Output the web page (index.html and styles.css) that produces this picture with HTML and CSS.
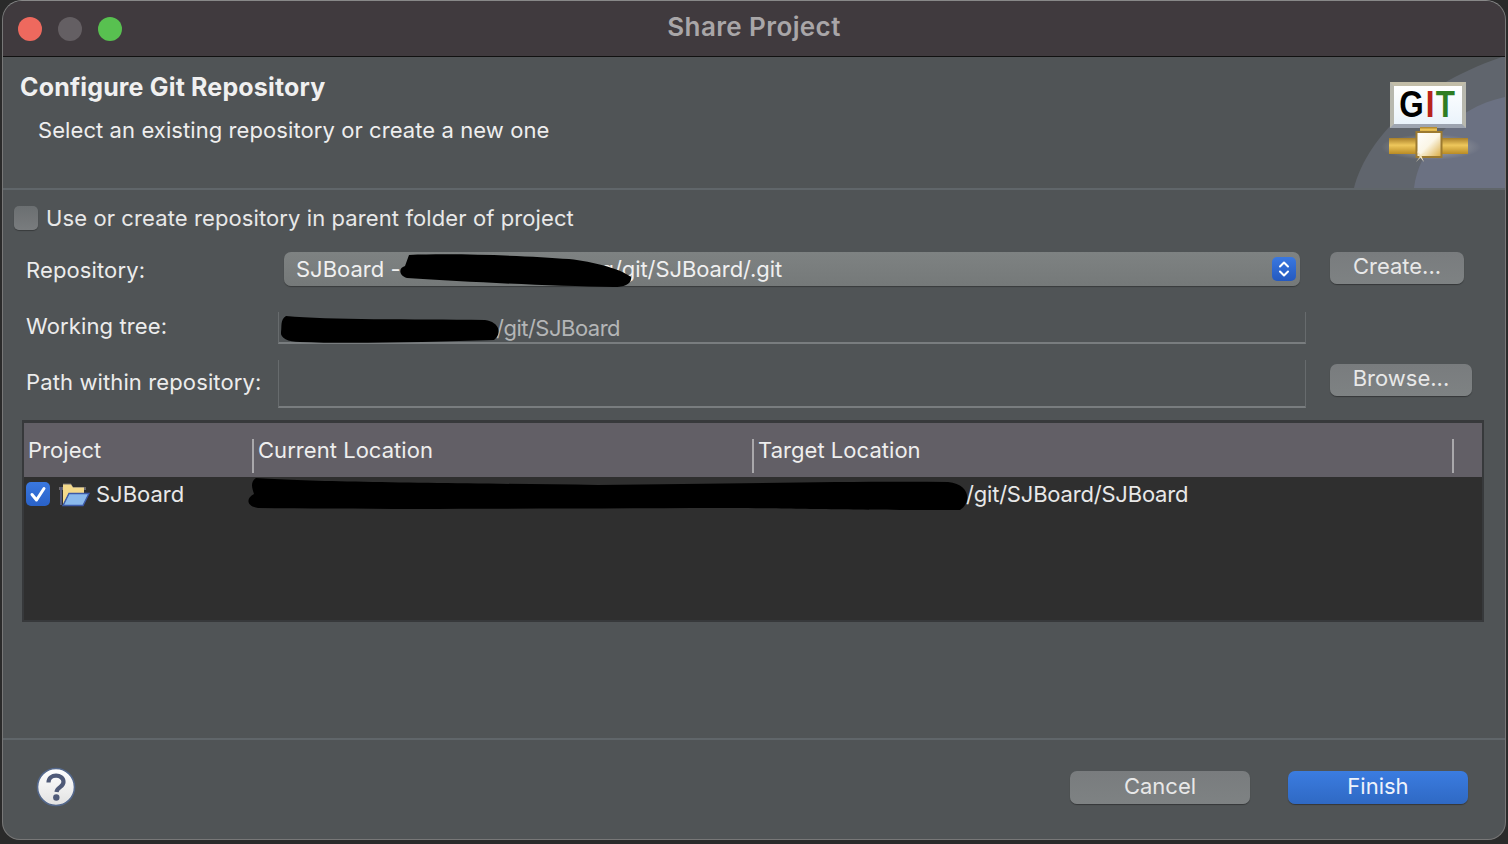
FILE: index.html
```html
<!DOCTYPE html>
<html lang="en">
<head>
  <meta charset="UTF-8">
  <title>Share Project</title>
  <link rel="stylesheet" href="styles.css">
</head>
<body>

  <div class="window">

    <!-- title bar -->
    <div class="titlebar">
      <span class="light light-red"></span>
      <span class="light light-grey"></span>
      <span class="light light-green"></span>
      <div class="title">Share Project</div>
    </div>

    <!-- wizard banner -->
    <div class="banner">
      <h1 class="banner-title">Configure Git Repository</h1>
      <p class="banner-text">Select an existing repository or create a new one</p>
      <svg class="banner-swoosh" width="152" height="132" viewBox="0 0 152 132">
        <defs>
          <radialGradient id="glow" cx="0.5" cy="0.5" r="0.5">
            <stop offset="0" stop-color="#c0c0bc" stop-opacity="0.95"/>
            <stop offset="1" stop-color="#b4b4b2" stop-opacity="0"/>
          </radialGradient>
        </defs>
        <path d="M1 132C11 90 59 30 152 0V132Z" fill="#60656d"/>
        <path d="M61 132C65 95 99 52 152 41V132Z" fill="#6b7182"/>
        <ellipse cx="78" cy="91" rx="50" ry="13" fill="url(#glow)"/>
      </svg>
      <div class="git-logo">
        <div class="git-sign"><span class="git-g">G</span><span class="git-i">I</span><span class="git-t">T</span></div>
        <svg class="git-pipe" width="80" height="32" viewBox="0 0 80 32">
          <defs>
            <linearGradient id="pipe" x1="0" y1="0" x2="0" y2="1">
              <stop offset="0" stop-color="#a87f2a"/>
              <stop offset="0.45" stop-color="#eec75c"/>
              <stop offset="1" stop-color="#b98b24"/>
            </linearGradient>
            <linearGradient id="valve" x1="0" y1="0" x2="1" y2="1">
              <stop offset="0" stop-color="#ffffff"/>
              <stop offset="0.5" stop-color="#fbf6e6"/>
              <stop offset="1" stop-color="#d9a93c"/>
            </linearGradient>
          </defs>
          <rect x="0" y="11" width="79" height="16" fill="url(#pipe)"/>
          <rect x="31" y="0" width="17" height="6" fill="url(#pipe)"/>
          <rect x="27.500" y="5" width="25" height="25" fill="url(#valve)" stroke="#9c7a30" stroke-width="2"/>
          <path d="M27 35L33 27L40 24L33 29ZM28 24L32 28L35 35L30 29Z" fill="#f4e6c0"/>
        </svg>
      </div>
    </div>

    <!-- form -->
    <div class="content">
      <label class="check-row">
        <span class="checkbox"></span>
        <span>Use or create repository in parent folder of project</span>
      </label>

      <div class="form-grid">
        <div class="form-label label-repo">Repository:</div>
        <div class="select">
          <span>SJBoard -</span>
          <span class="select-path">g/git/SJBoard/.git</span>
          <span class="select-arrows">
            <svg width="24" height="24" viewBox="0 0 24 24">
              <path d="M8 9.500L12 5.500L16 9.500M8 14.500L12 18.500L16 14.500" fill="none" stroke="#fff" stroke-width="2" stroke-linecap="round" stroke-linejoin="round"/>
            </svg>
          </span>
        </div>
        <button class="btn btn-create">Create...</button>

        <div class="form-label label-tree">Working tree:</div>
        <div class="field field-tree"><span class="tree-path">/git/SJBoard</span></div>
        <div></div>

        <div class="form-label label-path">Path within repository:</div>
        <div class="field field-path"></div>
        <button class="btn btn-browse">Browse...</button>
      </div>

      <div class="table">
        <div class="table-head">
          <div class="col-project">Project</div>
          <div class="col-current">Current Location</div>
          <div class="col-target">Target Location</div>
          <div class="col-end"></div>
        </div>
        <div class="table-row">
          <div class="col-project row-project">
            <span class="row-check">
              <svg width="24" height="24" viewBox="0 0 24 24">
                <path d="M6 12.500L10.500 18L18 6.500" fill="none" stroke="#fff" stroke-width="3" stroke-linecap="round" stroke-linejoin="round"/>
              </svg>
            </span>
            <svg class="folder" width="32" height="26" viewBox="0 0 32 26">
              <path d="M1 6H5V2.500H13L15 6H28V9H1Z" fill="#6c6a70"/>
              <path d="M5 24V3.500H13L15 6.500H26V12H11L5 24Z" fill="#f3d98b"/>
              <path d="M3 6V24" stroke="#55597a" stroke-width="2"/>
              <path d="M5 24.500L11 12.500H31L25 24.500Z" fill="#8ab9ec" stroke="#3c5aa8" stroke-width="1.400"/>
            </svg>
            <span>SJBoard</span>
          </div>
          <div class="col-current"></div>
          <div class="col-target row-target">/git/SJBoard/SJBoard</div>
        </div>
      </div>
    </div>

    <!-- buttons -->
    <div class="footer">
      <div class="help">
        <svg width="40" height="40" viewBox="0 0 40 40">
          <defs>
            <linearGradient id="helpfill" x1="0" y1="0" x2="0" y2="1">
              <stop offset="0" stop-color="#ffffff"/>
              <stop offset="1" stop-color="#e2e2e2"/>
            </linearGradient>
          </defs>
          <circle cx="20" cy="20" r="18.500" fill="url(#helpfill)" stroke="#54688c" stroke-width="1.600"/>
          <path d="M12.500 15.500C12.500 6.500 27.500 6.500 27.500 15C27.500 20 21 20 20.500 25" fill="none" stroke="#4f5a78" stroke-width="4.200"/>
          <circle cx="20.300" cy="30.500" r="3.200" fill="#4f5a78"/>
        </svg>
      </div>
      <button class="btn btn-cancel">Cancel</button>
      <button class="btn btn-finish">Finish</button>
    </div>

    <!-- blacked out paths -->
    <svg class="scribble scribble-repo" width="234" height="34" viewBox="0 0 234 34">
      <path d="M10 1C60 -1 130 2 170 5C195 8 220 14 232 23C233 30 225 33 215 33C150 32 70 28 8 24C0 22 -1 14 6 12Z" fill="#000"/>
    </svg>
    <svg class="scribble scribble-tree" width="222" height="28" viewBox="0 0 222 28">
      <path d="M6 0C50 4 130 3 205 4C220 6 222 18 214 24C150 26 70 28 20 26C8 26 0 22 1 16C2 10 0 4 6 0Z" fill="#000"/>
    </svg>
    <svg class="scribble scribble-row" width="722" height="34" viewBox="0 0 722 34">
      <path d="M8 0C60 4 200 5 350 7C480 6 600 3 700 4C722 6 724 24 712 32C600 32 560 31 500 30C350 30 150 32 10 30C-2 28 -2 20 6 16C4 10 2 4 8 0Z" fill="#000"/>
    </svg>
  </div>

</body>
</html>
```

FILE: styles.css
```css
html, body {
  margin: 0;
  padding: 0;
  height: 100%;
  overflow: hidden;
  background: #2a2a2a;
  font-family: 'Inter', 'Noto Sans', sans-serif;
  color: #e8e8e8;
}

.window {
  position: relative;
  box-sizing: border-box;
  width: 1504px;
  height: 840px;
  margin-left: 2px;
  display: flex;
  flex-direction: column;
  background: #505456;
  border: 1px solid #777;
  border-top-color: #888;
  border-radius: 20px 20px 18px 18px;
  overflow: hidden;
}

/* title bar */

.titlebar {
  position: relative;
  flex: none;
  height: 55px;
  display: flex;
  align-items: center;
  gap: 16px;
  padding-left: 15px;
  background: #403a3e;
  border-bottom: 1px solid #111;
}

.light {
  width: 24px;
  height: 24px;
  border-radius: 50%;
}

.light-red { background: #ee695e; }
.light-grey { background: #645f63; }
.light-green { background: #58c150; }

.title {
  position: absolute;
  top: 10px;
  left: 0;
  right: 0;
  text-align: center;
  font-size: 26px;
  line-height: 32px;
  font-weight: 600;
  letter-spacing: 0.4px;
  color: #a9a6a8;
}

/* banner */

.banner {
  position: relative;
  flex: none;
  box-sizing: border-box;
  height: 133px;
  padding: 14px 0 0 17px;
  border-bottom: 2px solid #60666a;
  overflow: hidden;
}

.banner-title {
  margin: 0;
  font-size: 25px;
  line-height: 32px;
  font-weight: 700;
  letter-spacing: 0.17px;
  color: #f0f0f0;
}

.banner-text {
  margin: 12px 0 0 18px;
  font-size: 22px;
  line-height: 30px;
  letter-spacing: 0.08px;
  color: #eee;
}

.banner-swoosh {
  position: absolute;
  right: 0;
  bottom: 0;
}

.git-logo {
  position: absolute;
  left: 1386px;
  top: 25px;
}

.git-sign {
  box-sizing: border-box;
  width: 76px;
  height: 46px;
  margin-left: 1px;
  display: flex;
  justify-content: center;
  align-items: center;
  background: linear-gradient(#fff, #eaf3fb);
  border: 4px solid;
  border-color: #c2bda8 #b8b8ae #9da4b0;
  font-family: 'Liberation Sans', sans-serif;
  font-size: 37px;
  font-weight: 700;
  color: #000;
}

.git-sign span {
  display: inline-block;
  transform: scaleX(0.85);
}

.git-g { margin: 0 -1px 0 -2px; }
.git-i { color: #b8231c; }
.git-t { color: #2f7d22; margin-left: -1px; }

.git-pipe {
  display: block;
  margin-top: -1px;
  overflow: visible;
}

/* form */

.content {
  flex: 1;
  padding: 14px 21px 0 19px;
}

.check-row {
  display: flex;
  align-items: center;
  gap: 8px;
  height: 28px;
  margin-left: -8px;
  font-size: 22px;
  letter-spacing: 0.1px;
}

.checkbox {
  width: 24px;
  height: 24px;
  border-radius: 5px;
  background: linear-gradient(#6b6f71, #797c7e);
  box-shadow: 0 1px 1px rgba(0,0,0,0.3);
}

.form-grid {
  display: grid;
  grid-template-columns: 252px 1028px 1fr;
  grid-template-rows: 60px 48px 48px;
  margin: 20px 0 0 4px;
  align-items: start;
  font-size: 22px;
}

.form-label {
  white-space: nowrap;
  letter-spacing: 0.12px;
  color: #ececec;
}

.label-repo { line-height: 36px; }
.label-tree { line-height: 28px; }
.label-path { line-height: 44px; }

.select {
  box-sizing: border-box;
  height: 34px;
  margin: 0 6px;
  padding: 0 4px 0 12px;
  display: flex;
  align-items: center;
  background: linear-gradient(#7e8282, #757979);
  border-radius: 7px;
  box-shadow: 0 1px 1px rgba(0,0,0,0.3);
  color: #f0f0f0;
}

.select-path {
  margin-left: 200px;
  letter-spacing: -0.08px;
}

.select-arrows {
  margin-left: auto;
  width: 24px;
  height: 24px;
  border-radius: 5px;
  background: linear-gradient(#3a78e0, #2459c0);
}

.select-arrows svg {
  display: block;
}

.field {
  box-sizing: border-box;
  border-left: 1px solid #676b6d;
  border-right: 1px solid #676b6d;
  border-bottom: 2px solid #797d7f;
  color: #b4b6b7;
}

.field-tree {
  height: 32px;
  padding-left: 217px;
  line-height: 32px;
  letter-spacing: -0.5px;
}

.field-path {
  height: 48px;
}

.btn {
  box-sizing: border-box;
  height: 32px;
  padding: 0 0 5px;
  border: 0;
  border-radius: 7px;
  font-family: inherit;
  font-size: 22px;
  color: #e8e8e8;
  background: linear-gradient(#797c7e, #7e8283);
  box-shadow: 0 1px 1px rgba(0,0,0,0.35);
}

.btn-create {
  width: 134px;
  margin-left: 24px;
}

.btn-browse {
  width: 142px;
  margin: 4px 0 0 24px;
}

/* table */

.table {
  box-sizing: border-box;
  height: 202px;
  margin: 12px 0 0 0;
  border: 2px solid #37393b;
  border-top-width: 3px;
  background: #2f2f2f;
  font-size: 22px;
}

.table-head,
.table-row {
  display: grid;
  grid-template-columns: 230px 500px 700px 1fr;
}

.table-head {
  box-sizing: border-box;
  height: 54px;
  padding-top: 16px;
  background: #625f66;
  color: #eee;
}

.table-head > div {
  box-sizing: border-box;
  height: 34px;
  line-height: 22px;
  padding-left: 4px;
  letter-spacing: 0.04px;
  border-right: 2px solid #a9a8ab;
}

.table-head .col-end { border-right: 0; }

.table-row {
  height: 34px;
  align-items: center;
}

.row-project {
  display: flex;
  align-items: center;
  padding-left: 2px;
}

.row-check {
  flex: none;
  width: 24px;
  height: 24px;
  margin-right: 8px;
  border-radius: 5px;
  background: linear-gradient(#3a78e0, #2a62c8);
}

.row-check svg {
  display: block;
}

.folder {
  flex: none;
  margin-right: 4px;
}

.row-project span:last-child {
  margin-left: 2px;
}

.row-target {
  padding-left: 212px;
  white-space: nowrap;
  letter-spacing: -0.2px;
}

/* buttons */

.footer {
  flex: none;
  box-sizing: border-box;
  height: 101px;
  display: flex;
  align-items: center;
  padding: 0 37px 5px 33px;
  border-top: 2px solid #60666a;
}

.help {
  width: 40px;
  height: 40px;
  margin: 0 auto 0 0;
}

.help svg {
  display: block;
}

.footer .btn {
  width: 180px;
  height: 33px;
  padding-bottom: 2px;
}

.btn-cancel {
  margin-right: 38px;
}

.footer .btn-finish {
  background: linear-gradient(#3b7ce0, #2f69c4);
  color: #eef3fb;
}

/* redactions, drawn over the paths */

.scribble {
  position: absolute;
}

.scribble-repo { left: 396px; top: 253px; }
.scribble-tree { left: 277px; top: 315px; }
.scribble-row { left: 245px; top: 477px; }
```
